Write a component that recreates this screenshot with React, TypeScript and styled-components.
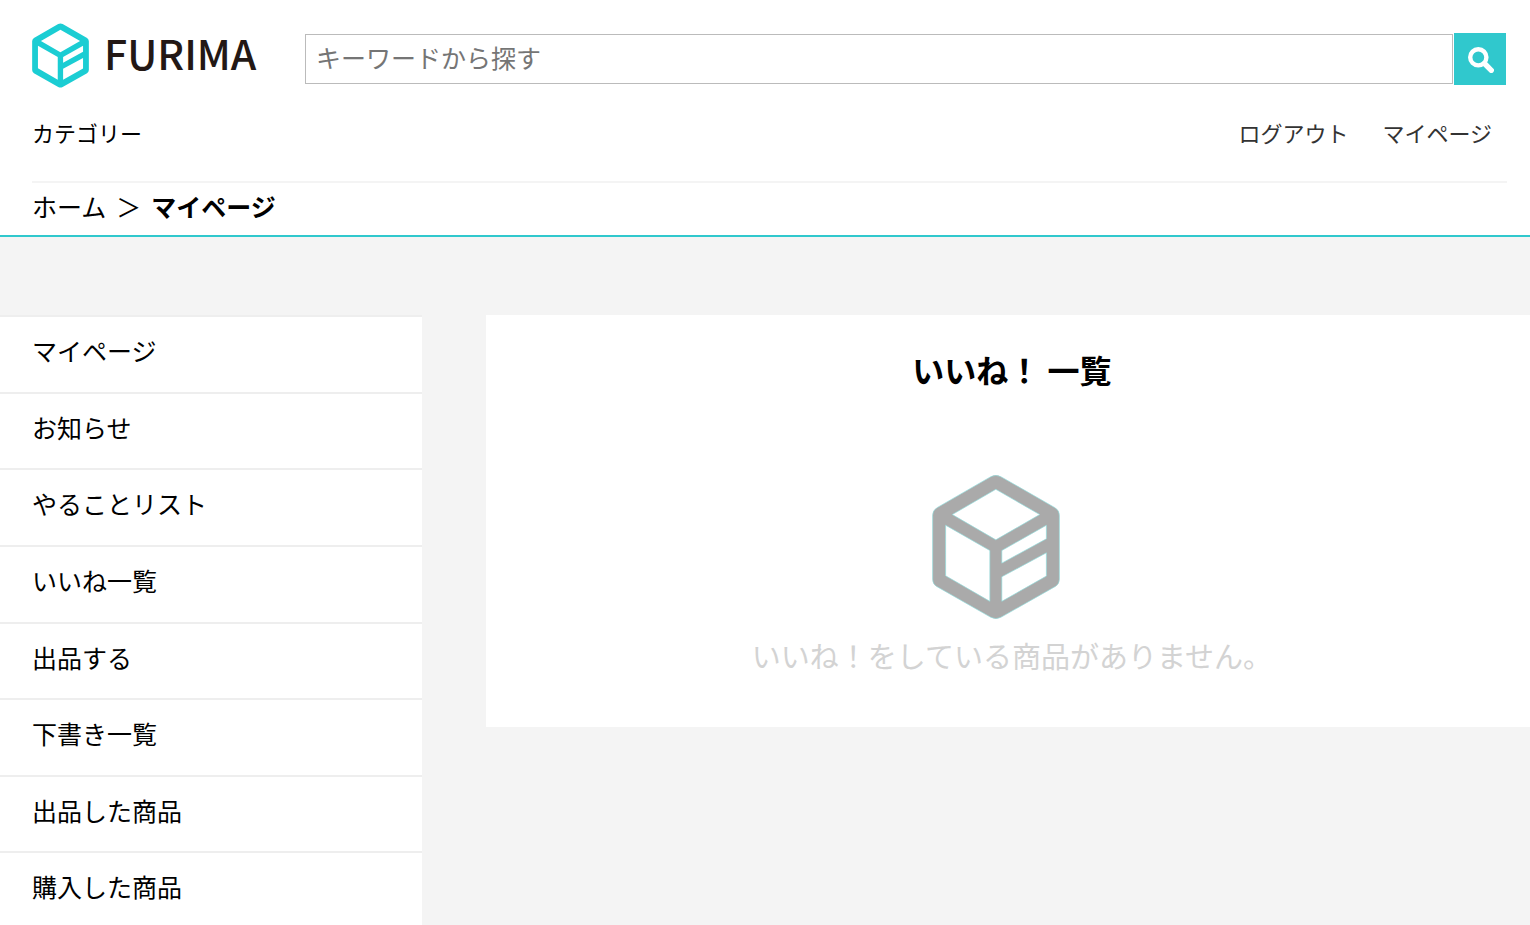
import React from "react";
import styled, { createGlobalStyle } from "styled-components";

const GlobalStyle = createGlobalStyle`
  * { box-sizing: border-box; }
  body {
    margin: 0;
    background: #f4f4f4;
    color: #000;
    font-family: "Noto Sans CJK JP", sans-serif;
    font-size: 25px;
  }
  a { color: inherit; text-decoration: none; }
`;

const Page = styled.div`
  height: 100vh;
  overflow-y: auto;
  scrollbar-width: none;
`;

const Header = styled.header`
  background: #fff;
  border-bottom: 2px solid #30c8cd;
  padding: 0 24px 0 32px;
`;

const TopRow = styled.div`
  display: flex;
  align-items: center;
  height: 118px;
`;

const Logo = styled.a`
  display: flex;
  align-items: center;
  gap: 15px;
  width: 273px;
  flex: none;
  margin-bottom: 7px;
`;

const Wordmark = styled.span`
  padding-bottom: 8px;
  color: #231815;
  font-size: 41px;
  font-weight: 500;
  line-height: 56px;
`;

const SearchForm = styled.form`
  display: flex;
  align-items: center;
  gap: 1px;
  flex: 1;
`;

const SearchInput = styled.input`
  flex: 1;
  min-width: 0;
  height: 50px;
  padding: 0 10px 4px;
  border: 1px solid #bbb;
  border-radius: 0;
  background: #fff;
  font: inherit;
  outline: none;
  &::placeholder { color: #757575; opacity: 1; }
`;

const SearchButton = styled.button`
  display: grid;
  place-items: center;
  width: 52px;
  height: 52px;
  padding: 2px 0 0 2px;
  border: 0;
  background: #30c8cd;
`;

const NavRow = styled.nav`
  display: flex;
  justify-content: space-between;
  padding: 0 14px 35px 0;
  font-size: 22px;
  line-height: 28px;
`;

const UserLinks = styled.div`
  display: flex;
  gap: 34px;
  color: #333;
`;

const Breadcrumb = styled.nav`
  display: flex;
  gap: 10px;
  margin-right: -1px;
  padding-bottom: 6px;
  border-top: 2px solid #f4f4f4;
  line-height: 46px;
`;

const Content = styled.div`
  display: flex;
  align-items: flex-start;
  gap: 64px;
  padding-top: 78px;
`;

const SideMenu = styled.ul`
  display: grid;
  grid-auto-rows: 1fr;
  flex: none;
  width: 422px;
  min-height: 613px;
  margin: 0;
  padding: 0;
  list-style: none;
  background: #fff;
`;

const MenuItem = styled.li`
  border-top: 2px solid #eee;
`;

const MenuLink = styled.a`
  display: block;
  padding: 13px 32px 0;
  line-height: 40px;
`;

const Panel = styled.main`
  display: flex;
  flex-direction: column;
  align-items: center;
  flex: 1;
  min-width: 0;
  padding: 30px 0 50px 8px;
  background: #fff;
`;

const Title = styled.h1`
  margin: 0 0 82px;
  font-size: 32px;
  font-weight: 700;
  line-height: 48px;
`;

const EmptyMark = styled.div`
  display: flex;
  padding-right: 32px;
`;

const EmptyText = styled.p`
  margin: 14px 0 0;
  color: #d3d3d3;
  font-size: 29px;
  line-height: 44px;
`;

function Cube({ width, height, color, edge }: { width: number; height: number; color: string; edge?: string }) {
  return (
    <svg width={width} height={height} viewBox="38 27 383 433" aria-hidden="true">
      <path
        fill={color}
        stroke={edge ?? "none"}
        strokeWidth="2"
        fillRule="evenodd"
        d="M214 32Q229 24 244 32L408 126Q420 134 420 148V341Q420 355 408 362L244 455Q229 463 214 455L51 362Q39 355 39 341V148Q39 134 51 126Z
           M229 70L361 146L229 222L98 146Z
           M78 178L211 254V407L78 330Z
           M381 178V219L247 292V254Z
           M381 261V331L247 407V333Z"
      />
    </svg>
  );
}

const menu = [
  "マイページ",
  "お知らせ",
  "やることリスト",
  "いいね一覧",
  "出品する",
  "下書き一覧",
  "出品した商品",
  "購入した商品",
];

export default function App() {
  return (
    <Page>
      <GlobalStyle />
      <Header>
        <TopRow>
          <Logo href="#">
            <Cube width={57} height={65} color="#1bcdd3" />
            <Wordmark>FURIMA</Wordmark>
          </Logo>
          <SearchForm role="search" onSubmit={(e) => e.preventDefault()}>
            <SearchInput type="text" aria-label="キーワードから探す" placeholder="キーワードから探す" />
            <SearchButton type="submit" aria-label="検索">
              <svg width="26" height="26" viewBox="0 0 26 26" fill="none" stroke="#fff">
                <circle cx="10.3" cy="10.3" r="8.1" strokeWidth="4.4" />
                <path d="M16.5 16.5L23.3 23.3" strokeWidth="5.4" strokeLinecap="round" />
              </svg>
            </SearchButton>
          </SearchForm>
        </TopRow>
        <NavRow>
          <a href="#">カテゴリー</a>
          <UserLinks>
            <a href="#">ログアウト</a>
            <a href="#">マイページ</a>
          </UserLinks>
        </NavRow>
        <Breadcrumb>
          <a href="#">ホーム</a>
          <span>＞</span>
          <strong>マイページ</strong>
        </Breadcrumb>
      </Header>
      <Content>
        <SideMenu>
          {menu.map((label) => (
            <MenuItem key={label}>
              <MenuLink href="#">{label}</MenuLink>
            </MenuItem>
          ))}
        </SideMenu>
        <Panel>
          <Title>いいね！ 一覧</Title>
          <EmptyMark>
            <Cube width={128} height={144} color="#aaa" edge="#8fdcdc" />
          </EmptyMark>
          <EmptyText>いいね！をしている商品がありません。</EmptyText>
        </Panel>
      </Content>
    </Page>
  );
}
